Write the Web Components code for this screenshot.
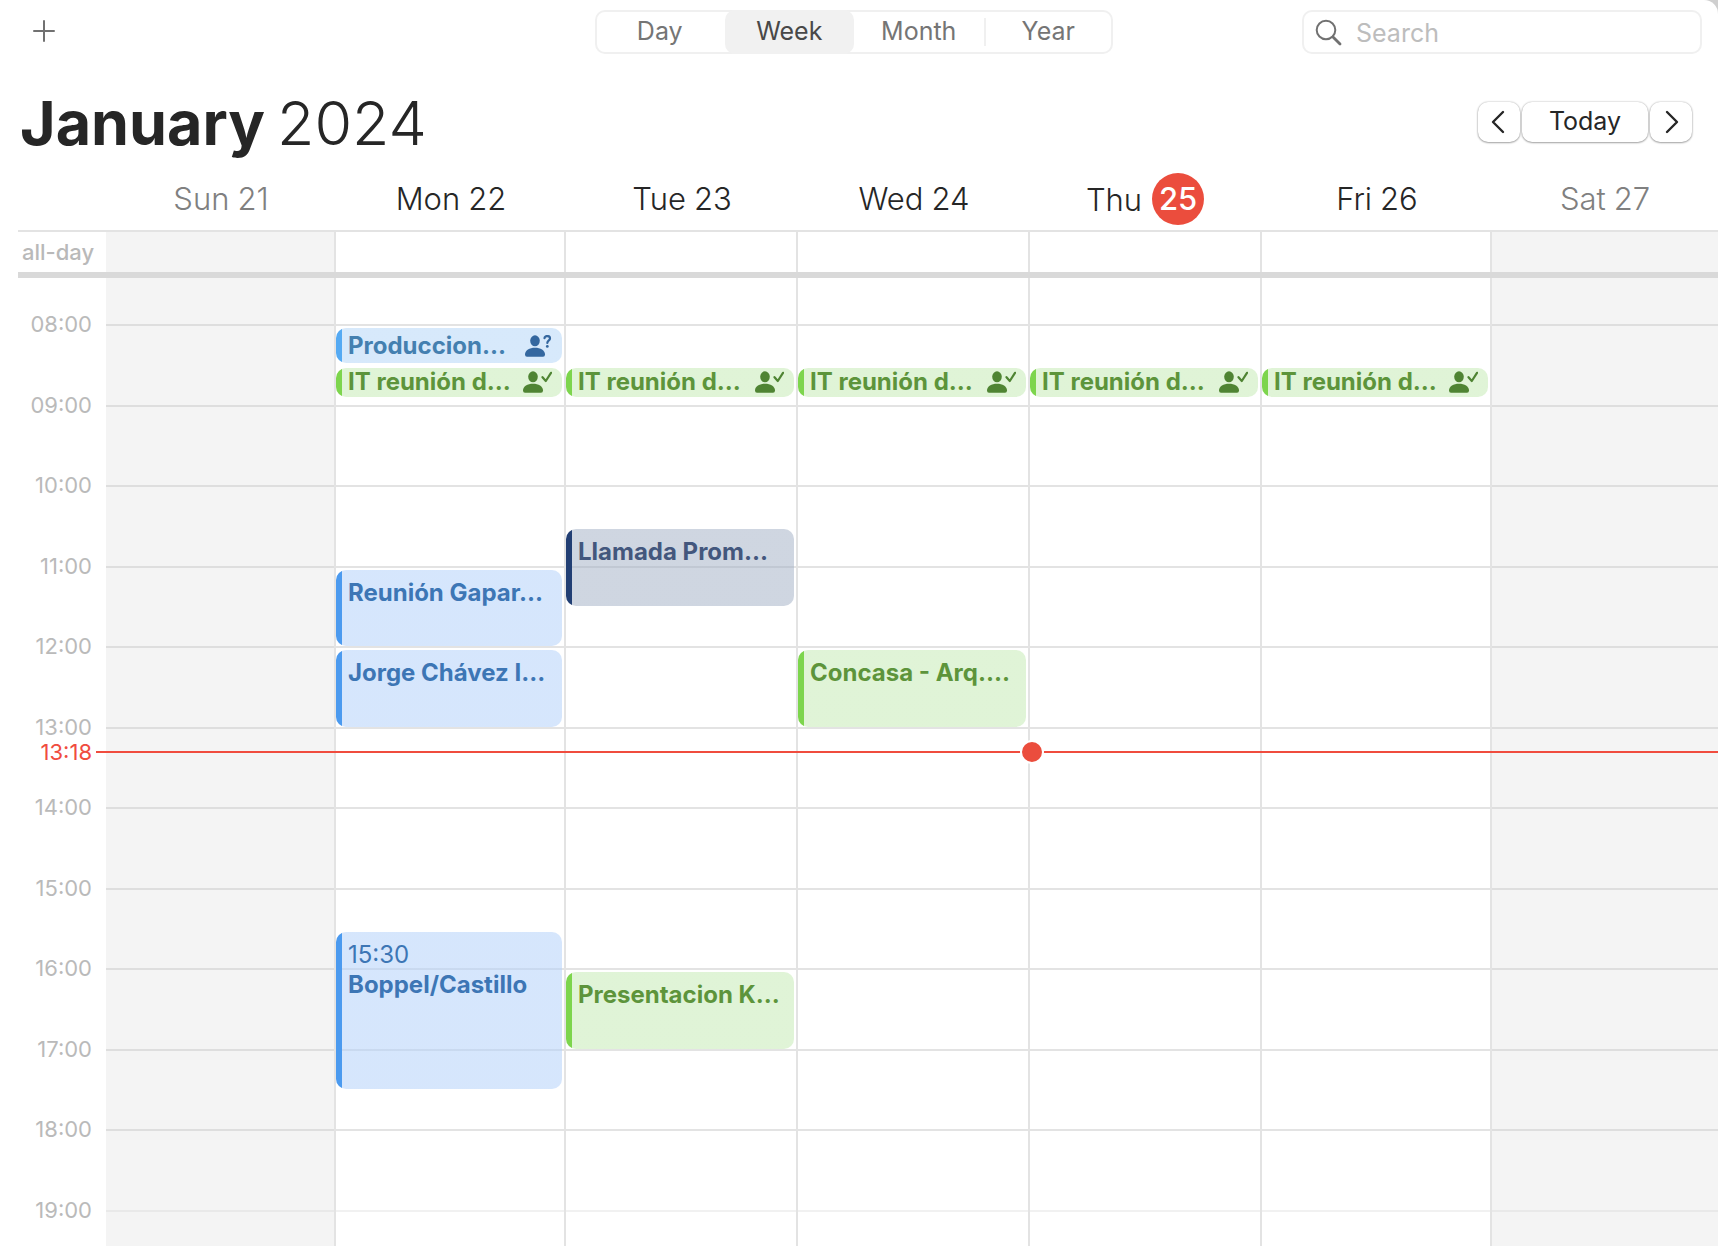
<!DOCTYPE html>
<html lang="en">
<head>
<meta charset="UTF-8">
<meta name="viewport" content="width=device-width, initial-scale=1.0">
<title>Calendar</title>
<style>
  html {
    background: #cfcfcf;
  }

  body {
    margin: 0;
    font-family: Inter, "Liberation Sans", sans-serif;
    color: #262626;
  }
</style>
</head>
<body>
<calendar-app></calendar-app>

<script>
// turns "15:30" into the matching line of the half-hour grid (08:00 is line 2)
const rowLine = (time) => {
  const [hours, minutes] = time.split(':').map(Number);
  return 2 + (hours - 8) * 2 + Math.round(minutes / 30);
};

class ViewSwitch extends HTMLElement {
  constructor() {
    super();
    this.attachShadow({ mode: 'open' });
  }

  connectedCallback() {
    this.shadowRoot.innerHTML = `
      <style>
        :host {
          display: flex;
          height: 44px;
          border-radius: 10px;
          box-shadow: inset 0 0 0 2px #f0f0f0;
        }

        button {
          flex: 1;
          border: 0;
          padding: 0 0 2px;
          border-radius: 10px;
          background: none;
          font: inherit;
          font-size: 25px;
          color: #757575;
          cursor: pointer;
        }

        button[aria-pressed='true'] {
          background: #f1f1f1;
          color: #484848;
        }

        .divided {
          border-radius: 0;
          background: linear-gradient(#f0f0f0, #f0f0f0) left center / 2px 28px no-repeat;
        }
      </style>
      <button type="button" aria-pressed="false">Day</button>
      <button type="button" aria-pressed="true">Week</button>
      <button type="button" aria-pressed="false">Month</button>
      <button type="button" aria-pressed="false" class="divided">Year</button>
    `;
  }
}

class SearchField extends HTMLElement {
  constructor() {
    super();
    this.attachShadow({ mode: 'open' });
  }

  connectedCallback() {
    this.shadowRoot.innerHTML = `
      <style>
        :host {
          display: block;
        }

        label {
          display: flex;
          align-items: center;
          gap: 14px;
          box-sizing: border-box;
          height: 44px;
          padding: 0 11px;
          border: 2px solid #f0f0f0;
          border-radius: 10px;
        }

        svg {
          flex: none;
        }

        input {
          flex: 1;
          min-width: 0;
          border: 0;
          padding: 2px 0 0;
          outline: none;
          background: none;
          font: inherit;
          font-size: 25px;
          color: #262626;
        }

        input::placeholder {
          color: #bdbdbd;
          opacity: 1;
        }
      </style>
      <label>
        <svg width="27" height="27" viewBox="0 0 27 27" fill="none" stroke="#717171" stroke-linecap="round" aria-hidden="true">
          <circle cx="11" cy="11" r="9.3" stroke-width="2"/>
          <path d="M18 18L25 25" stroke-width="2.8"/>
        </svg>
        <input type="text" placeholder="Search" aria-label="Search">
      </label>
    `;
  }
}

class WeekNav extends HTMLElement {
  constructor() {
    super();
    this.attachShadow({ mode: 'open' });
  }

  connectedCallback() {
    this.shadowRoot.innerHTML = `
      <style>
        :host {
          display: flex;
          gap: 2px;
        }

        button {
          display: flex;
          align-items: center;
          justify-content: center;
          width: 42px;
          height: 40px;
          padding: 0;
          border: 0;
          border-radius: 10px;
          background: #fff;
          box-shadow: 0 0 2px rgba(0, 0, 0, 0.3), 0 1px 2px rgba(0, 0, 0, 0.3);
          font: inherit;
          font-size: 25px;
          color: #262626;
          cursor: pointer;
        }

        .today {
          width: 126px;
          padding-bottom: 2px;
        }
      </style>
      <button type="button" aria-label="Previous week">
        <svg width="16" height="24" viewBox="0 0 16 24" fill="none" stroke="#262626" stroke-width="2.4" stroke-linecap="round" stroke-linejoin="round"><path d="M12 2L2 12L12 22"/></svg>
      </button>
      <button type="button" class="today">Today</button>
      <button type="button" aria-label="Next week">
        <svg width="16" height="24" viewBox="0 0 16 24" fill="none" stroke="#262626" stroke-width="2.4" stroke-linecap="round" stroke-linejoin="round"><path d="M4 2L14 12L4 22"/></svg>
      </button>
    `;
  }
}

class DayHeading extends HTMLElement {
  constructor() {
    super();
    this.attachShadow({ mode: 'open' });
  }

  connectedCallback() {
    this.shadowRoot.innerHTML = `
      <style>
        :host {
          display: flex;
          align-items: center;
          justify-content: center;
          gap: 8px;
          box-sizing: border-box;
          height: 62px;
          padding-bottom: 2px;
          font-size: 31px;
          font-weight: 300;
        }

        :host([weekend]) {
          color: #808080;
        }

        :host([today]) {
          gap: 10px;
          padding: 0 2px 0 0;
        }

        :host([today]) .date {
          width: 52px;
          border-radius: 50%;
          background: #eb4d3d;
          color: #fff;
          font-weight: 500;
          line-height: 52px;
          text-align: center;
        }
      </style>
      <slot></slot>
      <span class="date">${this.getAttribute('date')}</span>
    `;
  }
}

class CalendarEvent extends HTMLElement {
  constructor() {
    super();
    this.attachShadow({ mode: 'open' });
  }

  connectedCallback() {
    const start = this.getAttribute('start');
    const status = this.getAttribute('status');
    this.style.gridRow = `${rowLine(start)} / ${rowLine(this.getAttribute('end'))}`;

    const badges = {
      pending: '<path d="M19.5 3.2C19.5 .4 25 .2 25 3.4C25 5.4 22.3 5.4 22.3 8" fill="none" stroke="currentColor" stroke-width="2.2" stroke-linecap="round"/><circle cx="22.3" cy="11.4" r="1.4"/>',
      accepted: '<path d="M19.5 6.2L22.8 10L28 1.8" fill="none" stroke="currentColor" stroke-width="2.2" stroke-linecap="round" stroke-linejoin="round"/>',
    };

    this.shadowRoot.innerHTML = `
      <style>
        :host {
          --bar: #4b9aef;
          --fill: rgba(179, 209, 250, 0.54);
          --ink: #3d76b5;
          display: block;
          box-sizing: border-box;
          min-width: 0;
          margin: 4px 2px 0 0;
          padding: 8px 0 0 12px;
          overflow: hidden;
          border-radius: 10px;
          background: linear-gradient(90deg, var(--bar) 6px, var(--fill) 6px);
          color: var(--ink);
          font-size: 24px;
          line-height: 30px;
          white-space: nowrap;
        }

        :host([color='sky']) {
          --bar: #55aaf3;
          --fill: rgba(175, 211, 247, 0.5);
          --ink: #4480b0;
          --icon: #34679f;
        }

        :host([color='green']) {
          --bar: #7dd54d;
          --fill: rgba(193, 233, 175, 0.5);
          --ink: #5d943b;
          --icon: #4f8433;
        }

        :host([color='navy']) {
          --bar: #223f74;
          --fill: rgba(159, 173, 195, 0.5);
          --ink: #43577d;
        }

        /* one-line events carry the invitation icon on the right */
        :host([status]) {
          display: flex;
          align-items: center;
          justify-content: space-between;
          padding: 0 10px 0 12px;
          margin-bottom: 1px;
        }

        :host([short]) {
          align-self: start;
          height: 29px;
          padding-bottom: 2px;
        }

        .title {
          font-weight: 700;
        }

        svg {
          flex: none;
          color: var(--icon);
        }
      </style>
      ${this.hasAttribute('show-time') ? `<div>${start}</div>` : ''}
      <div class="title"><slot></slot></div>
      ${status ? `<svg width="${status === 'pending' ? 27 : 29}" height="22" viewBox="0 0 ${status === 'pending' ? 27 : 29} 22" fill="currentColor" aria-hidden="true">
        <ellipse cx="10" cy="5.8" rx="4.8" ry="5.5"/>
        <path d="M0 19.5C0 15.5 4.5 12.8 10 12.8S20 15.5 20 19.5Q20 21.8 18 21.8H2Q0 21.8 0 19.5Z"/>
        ${badges[status]}
      </svg>` : ''}
    `;
  }
}

class DayColumn extends HTMLElement {
  constructor() {
    super();
    this.attachShadow({ mode: 'open' });
  }

  connectedCallback() {
    const hours = Array.from({ length: 12 }, (_, i) => `<div class="hour" style="grid-row: ${2 + i * 2}"></div>`);
    this.shadowRoot.innerHTML = `
      <style>
        :host {
          display: grid;
          grid-template-rows: var(--half-hours);
          grid-template-columns: minmax(0, 1fr);
          border-right: 2px solid #e3e3e3;
        }

        :host([weekend]) {
          background: #f4f4f4;
        }

        :host(:last-of-type) {
          border-right: 0;
        }

        .hour,
        ::slotted(*) {
          grid-column: 1;
        }

        .hour {
          border-top: 2px solid #e3e3e3;
        }

        :host([weekend]) .hour {
          border-color: #dedede;
        }

        .hour:last-of-type {
          opacity: 0.5;
        }
      </style>
      ${hours.join('')}
      <slot></slot>
    `;
  }
}

class TimeGutter extends HTMLElement {
  constructor() {
    super();
    this.attachShadow({ mode: 'open' });
  }

  connectedCallback() {
    let labels = '';
    for (let hour = 8; hour <= 19; hour++) {
      const time = `${String(hour).padStart(2, '0')}:00`;
      labels += `<time style="grid-row: ${rowLine(time)}">${time}</time>`;
    }
    this.shadowRoot.innerHTML = `
      <style>
        :host {
          display: grid;
          grid-template-rows: var(--half-hours);
          justify-items: end;
          padding-right: 14px;
          color: #bababa;
          font-size: 22px;
          line-height: 30px;
        }

        /* centred on the hour line */
        time {
          margin-top: -15px;
        }
      </style>
      ${labels}
    `;
  }
}

class NowLine extends HTMLElement {
  constructor() {
    super();
    this.attachShadow({ mode: 'open' });
  }

  connectedCallback() {
    this.shadowRoot.innerHTML = `
      <style>
        :host {
          display: grid;
          grid-template-columns: var(--week-columns);
          align-items: center;
          height: 30px;
        }

        time {
          grid-area: 1 / 1;
          padding-right: 14px;
          color: #f04c3e;
          font-size: 22px;
          line-height: 30px;
          text-align: right;
        }

        .line {
          grid-area: 1 / 1 / 2 / -1;
          height: 2px;
          margin-left: 78px;
          background: #f04c3e;
        }

        .dot {
          grid-area: 1 / 6;
          width: 20px;
          height: 20px;
          margin-left: -10px;
          border: 2px solid #fff;
          border-radius: 50%;
          background: #eb4d3d;
        }
      </style>
      <time><slot></slot></time>
      <div class="line"></div>
      <div class="dot"></div>
    `;
  }
}

class CalendarApp extends HTMLElement {
  constructor() {
    super();
    this.attachShadow({ mode: 'open' });
  }

  connectedCallback() {
    this.shadowRoot.innerHTML = `
      <style>
        :host {
          --week-columns: 88px 230fr 230fr 232fr 232fr 232fr 230fr 226fr;
          --half-hours: 46px repeat(5, 40px 41px 40px 40px) 40px 41px minmax(36px, 1fr);
          display: flex;
          flex-direction: column;
          min-height: 100vh;
          overflow: hidden;
          border-top-right-radius: 14px;
          background: #fff;
        }

        .toolbar {
          display: grid;
          grid-template-columns: 1fr 518px 1fr;
          padding: 10px 16px 10px 6px;
        }

        .add {
          display: flex;
          align-items: center;
          justify-content: center;
          width: 44px;
          height: 44px;
          margin-left: 16px;
          padding: 0 0 2px;
          border: 0;
          background: none;
          cursor: pointer;
        }

        search-field {
          justify-self: end;
          width: 400px;
        }

        .title {
          display: flex;
          align-items: center;
          justify-content: space-between;
          padding: 14px 26px 0 20px;
        }

        h1 {
          display: flex;
          gap: 12px;
          margin: 0;
          font-size: 61px;
          font-weight: 300;
          line-height: 90px;
        }

        h1 strong {
          font-weight: 700;
        }

        week-nav {
          margin-bottom: 2px;
        }

        .week {
          display: flex;
          flex: 1;
          flex-direction: column;
          margin-left: 18px;
        }

        .headings,
        .all-day,
        .days {
          display: grid;
          grid-template-columns: var(--week-columns);
        }

        .headings day-heading:first-of-type {
          grid-column: 2;
        }

        .all-day {
          height: 40px;
          border-top: 2px solid #e3e3e3;
          border-bottom: 6px solid #d9d9d9;
          color: #b9b9b9;
          font-size: 22px;
          font-weight: 500;
          line-height: 40px;
        }

        .all-day span {
          padding-left: 4px;
        }

        .all-day div {
          border-right: 2px solid #e3e3e3;
        }

        .all-day div:last-child {
          border-right: 0;
        }

        .all-day .weekend {
          background: #f4f4f4;
        }

        .days {
          position: relative;
          flex: 1;
        }

        now-line {
          position: absolute;
          top: 459px;
          left: 0;
          right: 0;
        }
      </style>

      <header class="toolbar">
        <button type="button" class="add" aria-label="New event">
          <svg width="22" height="22" viewBox="0 0 22 22" stroke="#717171" stroke-width="2" stroke-linecap="round"><path d="M11 1V21M1 11H21"/></svg>
        </button>
        <view-switch></view-switch>
        <search-field></search-field>
      </header>

      <div class="title">
        <h1><strong>January</strong> <span>2024</span></h1>
        <week-nav></week-nav>
      </div>

      <main class="week">
        <div class="headings">
          <day-heading date="21" weekend>Sun</day-heading>
          <day-heading date="22">Mon</day-heading>
          <day-heading date="23">Tue</day-heading>
          <day-heading date="24">Wed</day-heading>
          <day-heading date="25" today>Thu</day-heading>
          <day-heading date="26">Fri</day-heading>
          <day-heading date="27" weekend>Sat</day-heading>
        </div>

        <div class="all-day">
          <span>all-day</span>
          <div class="weekend"></div>
          <div></div>
          <div></div>
          <div></div>
          <div></div>
          <div></div>
          <div class="weekend"></div>
        </div>

        <div class="days">
          <time-gutter></time-gutter>
          <day-column weekend></day-column>
          <day-column>
            <calendar-event start="08:00" end="08:30" color="sky" status="pending">Produccion...</calendar-event>
            <calendar-event start="08:30" end="09:00" color="green" status="accepted" short>IT reunión d...</calendar-event>
            <calendar-event start="11:00" end="12:00">Reunión Gapar...</calendar-event>
            <calendar-event start="12:00" end="13:00">Jorge Chávez I...</calendar-event>
            <calendar-event start="15:30" end="17:30" show-time>Boppel/Castillo</calendar-event>
          </day-column>
          <day-column>
            <calendar-event start="08:30" end="09:00" color="green" status="accepted" short>IT reunión d...</calendar-event>
            <calendar-event start="10:30" end="11:30" color="navy">Llamada Prom...</calendar-event>
            <calendar-event start="16:00" end="17:00" color="green">Presentacion K...</calendar-event>
          </day-column>
          <day-column>
            <calendar-event start="08:30" end="09:00" color="green" status="accepted" short>IT reunión d...</calendar-event>
            <calendar-event start="12:00" end="13:00" color="green">Concasa - Arq....</calendar-event>
          </day-column>
          <day-column>
            <calendar-event start="08:30" end="09:00" color="green" status="accepted" short>IT reunión d...</calendar-event>
          </day-column>
          <day-column>
            <calendar-event start="08:30" end="09:00" color="green" status="accepted" short>IT reunión d...</calendar-event>
          </day-column>
          <day-column weekend></day-column>
          <now-line>13:18</now-line>
        </div>
      </main>
    `;
  }
}

customElements.define('view-switch', ViewSwitch);
customElements.define('search-field', SearchField);
customElements.define('week-nav', WeekNav);
customElements.define('day-heading', DayHeading);
customElements.define('calendar-event', CalendarEvent);
customElements.define('day-column', DayColumn);
customElements.define('time-gutter', TimeGutter);
customElements.define('now-line', NowLine);
customElements.define('calendar-app', CalendarApp);
</script>
</body>
</html>
